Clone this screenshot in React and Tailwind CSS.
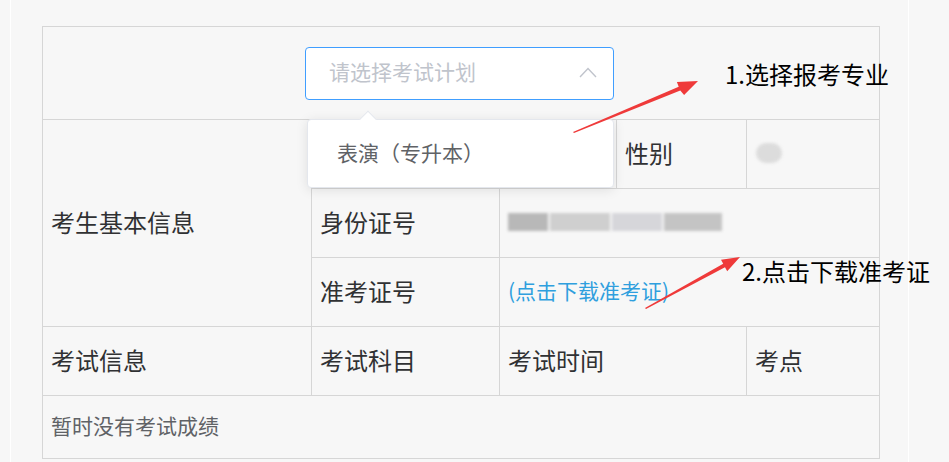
const cell = "border border-[#d6d6d6] px-2 pb-[3px] align-middle text-left font-normal";
const label = "text-[24px] text-[#303133]";

const Arrow = ({ points }) => <polygon points={points} fill="#ef3a3a" />;

export default function App() {
  return (
    <div className="relative flex h-[462px] w-[949px] overflow-hidden bg-[#f7f7f7] [font-family:'Noto_Sans_CJK_SC','Noto_Sans',sans-serif]">
      <div className="w-[10px] shrink-0" />
      <div className="w-[1px] shrink-0 bg-white" />
      <div className="w-[897px] shrink-0 pl-[31px] pt-[26px]">
        <table className="w-[837px] table-fixed border-collapse">
          <colgroup>
            <col className="w-[269px]" />
            <col className="w-[188px]" />
            <col className="w-[117px]" />
            <col className="w-[130px]" />
            <col className="w-[133px]" />
          </colgroup>
          <tbody>
            <tr className="h-[93px]">
              <td colSpan={5} className="border border-[#d6d6d6] px-2 align-middle">
                <div className="ml-[254px] flex h-[53px] w-[309px] items-center justify-between rounded-[4px] border border-[#409eff] bg-white pb-[2px] pl-[23px] pr-[16px]">
                  <span className="text-[21px] text-[#c0c4cc]">请选择考试计划</span>
                  <svg width="18" height="11" viewBox="0 0 18 11" fill="none">
                    <polyline points="1,10 9,1.5 17,10" stroke="#c0c4cc" strokeWidth="1.4" />
                  </svg>
                </div>
              </td>
            </tr>
            <tr className="h-[69px]">
              <td rowSpan={3} className={cell + " " + label}>考生基本信息</td>
              <td className={cell} />
              <td className={cell} />
              <td className={cell + " " + label}>性别</td>
              <td className={cell}>
                <div className="ml-[1px] h-[20px] w-[26px] rounded-full bg-[#dcdcdc] blur-[1.5px]" />
              </td>
            </tr>
            <tr className="h-[69px]">
              <td className={cell + " " + label}>身份证号</td>
              <td colSpan={3} className={cell}>
                <div className="flex h-[18px] w-[214px] items-center gap-[2px] blur-[1.5px]">
                  <div className="h-full w-[40px] bg-[#b8b8b8]" />
                  <div className="h-full w-[60px] bg-[#cfcfcf]" />
                  <div className="h-full w-[50px] bg-[#d6d6da]" />
                  <div className="h-full w-[58px] bg-[#c4c4c4]" />
                </div>
              </td>
            </tr>
            <tr className="h-[69px]">
              <td className={cell + " " + label}>准考证号</td>
              <td colSpan={3} className={cell}>
                <span className="text-[21px] text-[#2f9fde]">(点击下载准考证)</span>
              </td>
            </tr>
            <tr className="h-[69px]">
              <td className={cell + " " + label}>考试信息</td>
              <td className={cell + " " + label}>考试科目</td>
              <td colSpan={2} className={cell + " " + label}>考试时间</td>
              <td className={cell + " " + label}>考点</td>
            </tr>
            <tr className="h-[63px]">
              <td colSpan={5} className={cell + " text-[21px] text-[#606266]"}>暂时没有考试成绩</td>
            </tr>
          </tbody>
        </table>
      </div>
      <div className="w-[1px] shrink-0 bg-white" />

      {/* dropdown popper */}
      <div className="absolute left-[307px] top-[119px] flex h-[69px] w-[307px] items-center rounded-[4px] border border-[#e4e7ed] bg-white pb-[2px] pl-[29px] shadow-[0_2px_12px_rgba(0,0,0,0.1)]">
        <span className="text-[21px] text-[#606266]">表演（专升本）</span>
        <div className="absolute left-[54px] top-[-7px] h-[12px] w-[12px] rotate-45 border-l border-t border-[#e4e7ed] bg-white" />
      </div>

      {/* annotations */}
      <svg className="pointer-events-none absolute left-0 top-0" width="949" height="462">
        <Arrow points="573,132 678.7,86.7 676.9,82.1 698,81 684.1,95.1 680.3,90.5 574,133" />
        <Arrow points="645,308 723.2,263.7 721,259.8 740,257 727.2,271.2 725,267.3 646,309" />
      </svg>
      <div className="absolute left-[725px] top-[57px] text-[24px] leading-[34px] text-black">1.选择报考专业</div>
      <div className="absolute left-[742px] top-[254px] text-[24px] leading-[34px] text-black">2.点击下载准考证</div>
    </div>
  );
}
